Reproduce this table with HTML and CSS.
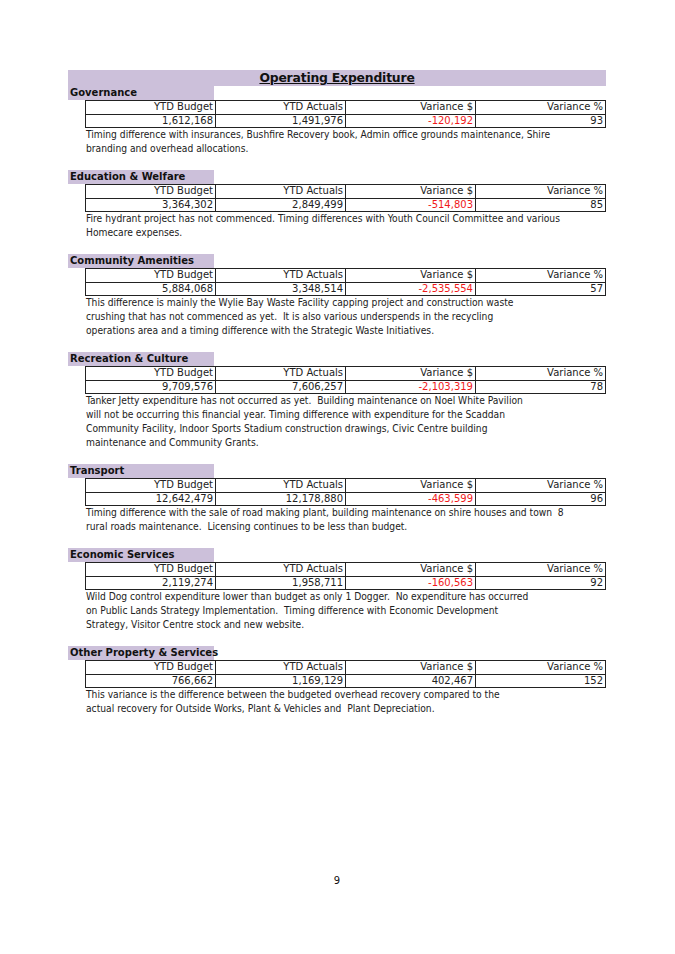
FILE: index.html
```html
<!DOCTYPE html>
<html>
<head>
<meta charset="utf-8">
<link rel="stylesheet" href="styles.css">
</head>
<body>
<div class="page">
  <div class="title-bar"><span class="title">Operating Expenditure</span></div>

  <section class="section">
    <div class="head">Governance</div>
    <table class="grid">
      <tr><td>YTD Budget</td><td>YTD Actuals</td><td>Variance $</td><td>Variance %</td></tr>
      <tr><td>1,612,168</td><td>1,491,976</td><td class="neg">-120,192</td><td>93</td></tr>
    </table>
    <div class="note">Timing difference with insurances, Bushfire Recovery book, Admin office grounds maintenance, Shire
branding and overhead allocations.</div>
  </section>

  <section class="section">
    <div class="head">Education &amp; Welfare</div>
    <table class="grid">
      <tr><td>YTD Budget</td><td>YTD Actuals</td><td>Variance $</td><td>Variance %</td></tr>
      <tr><td>3,364,302</td><td>2,849,499</td><td class="neg">-514,803</td><td>85</td></tr>
    </table>
    <div class="note">Fire hydrant project has not commenced. Timing differences with Youth Council Committee and various
Homecare expenses.</div>
  </section>

  <section class="section">
    <div class="head">Community Amenities</div>
    <table class="grid">
      <tr><td>YTD Budget</td><td>YTD Actuals</td><td>Variance $</td><td>Variance %</td></tr>
      <tr><td>5,884,068</td><td>3,348,514</td><td class="neg">-2,535,554</td><td>57</td></tr>
    </table>
    <div class="note">This difference is mainly the Wylie Bay Waste Facility capping project and construction waste
crushing that has not commenced as yet.  It is also various underspends in the recycling
operations area and a timing difference with the Strategic Waste Initiatives.</div>
  </section>

  <section class="section">
    <div class="head">Recreation &amp; Culture</div>
    <table class="grid">
      <tr><td>YTD Budget</td><td>YTD Actuals</td><td>Variance $</td><td>Variance %</td></tr>
      <tr><td>9,709,576</td><td>7,606,257</td><td class="neg">-2,103,319</td><td>78</td></tr>
    </table>
    <div class="note">Tanker Jetty expenditure has not occurred as yet.  Building maintenance on Noel White Pavilion
will not be occurring this financial year. Timing difference with expenditure for the Scaddan
Community Facility, Indoor Sports Stadium construction drawings, Civic Centre building
maintenance and Community Grants.</div>
  </section>

  <section class="section">
    <div class="head">Transport</div>
    <table class="grid">
      <tr><td>YTD Budget</td><td>YTD Actuals</td><td>Variance $</td><td>Variance %</td></tr>
      <tr><td>12,642,479</td><td>12,178,880</td><td class="neg">-463,599</td><td>96</td></tr>
    </table>
    <div class="note">Timing difference with the sale of road making plant, building maintenance on shire houses and town  8
rural roads maintenance.  Licensing continues to be less than budget.</div>
  </section>

  <section class="section">
    <div class="head">Economic Services</div>
    <table class="grid">
      <tr><td>YTD Budget</td><td>YTD Actuals</td><td>Variance $</td><td>Variance %</td></tr>
      <tr><td>2,119,274</td><td>1,958,711</td><td class="neg">-160,563</td><td>92</td></tr>
    </table>
    <div class="note">Wild Dog control expenditure lower than budget as only 1 Dogger.  No expenditure has occurred
on Public Lands Strategy Implementation.  Timing difference with Economic Development
Strategy, Visitor Centre stock and new website.</div>
  </section>

  <section class="section">
    <div class="head">Other Property &amp; Services</div>
    <table class="grid">
      <tr><td>YTD Budget</td><td>YTD Actuals</td><td>Variance $</td><td>Variance %</td></tr>
      <tr><td>766,662</td><td>1,169,129</td><td>402,467</td><td>152</td></tr>
    </table>
    <div class="note">This variance is the difference between the budgeted overhead recovery compared to the
actual recovery for Outside Works, Plant &amp; Vehicles and  Plant Depreciation.</div>
  </section>

  <div class="page-num">9</div>
</div>
</body>
</html>
```

FILE: styles.css
```css
html, body {
  margin: 0;
  padding: 0;
  background: #ffffff;
}
body {
  font-family: "DejaVu Sans", Verdana, sans-serif;
  color: #111;
}
.page {
  width: 538px;
  margin-left: 68px;
  padding-top: 70px;
}
.title-bar {
  background: #ccc0da;
  height: 16px;
  display: flex;
  justify-content: center;
  align-items: center;
}
.title {
  font-weight: bold;
  font-size: 12.4px;
  text-decoration: underline;
  line-height: 16px;
  letter-spacing: -0.2px;
}
.section {
  margin-bottom: 14px;
}
.head {
  width: 146px;
  height: 14px;
  background: #ccc0da;
  font-weight: bold;
  font-size: 10px;
  line-height: 14px;
  padding-left: 2px;
  box-sizing: border-box;
  white-space: nowrap;
}
.grid {
  margin-left: 17px;
  width: 521px;
  border-collapse: collapse;
  table-layout: fixed;
  font-size: 10px;
}
.grid td {
  border: 1px solid #222;
  height: 12px;
  padding: 0 2px 0 0;
  line-height: 12.5px;
  text-align: right;
  color: #222;
  white-space: nowrap;
}
.grid td.neg {
  color: #f01a1a;
}
.note {
  margin-left: 18px;
  font-family: "DejaVu Sans Condensed", "DejaVu Sans", sans-serif;
  font-stretch: condensed;
  font-size: 10.2px;
  line-height: 14px;
  white-space: pre;
  color: #222;
}
.page-num {
  margin-top: 159px;
  text-align: center;
  font-size: 10px;
}
```
